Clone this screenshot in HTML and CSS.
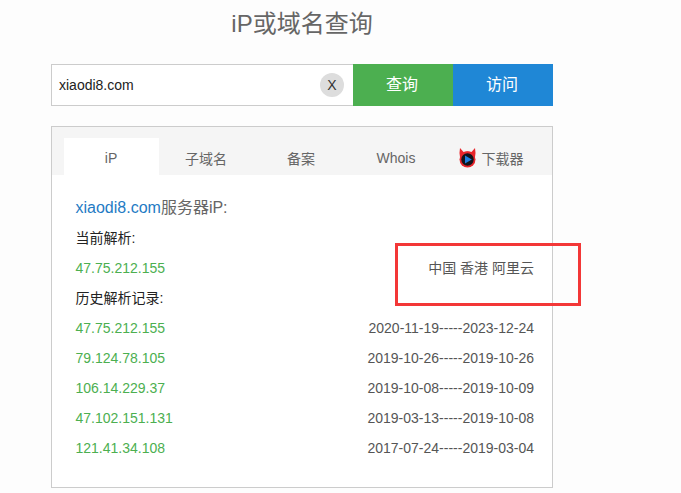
FILE: index.html
```html
<!DOCTYPE html>
<html lang="en">
<head>
    <meta charset="UTF-8">
    <title>iP或域名查询</title>
    <link rel="stylesheet" href="styles.css">
</head>
<body>
    <div class="wrap">
        <h1>iP或域名查询</h1>

        <div class="search">
            <div class="search-box">
                <span class="search-text">xiaodi8.com</span>
                <span class="clear">X</span>
            </div>
            <div class="btn btn-green">查询</div>
            <div class="btn btn-blue">访问</div>
        </div>

        <div class="panel">
            <div class="tabs">
                <div class="tab active">iP</div>
                <div class="tab">子域名</div>
                <div class="tab">备案</div>
                <div class="tab">Whois</div>
                <div class="tab">
                    <svg class="tab-icon" width="17" height="20" viewBox="0 0 17 20">
                        <path d="M1 0 L4.5 4 Q8.5 2.6 12.5 4 L16 0 Q17 5 16 9 L1 9 Q0 5 1 0 Z" fill="#e8262c"/>
                        <circle cx="8.5" cy="11.5" r="8" fill="#e8262c"/>
                        <circle cx="8.5" cy="11.5" r="6.2" fill="#13151c"/>
                        <path d="M6 7.6 L12.8 11.5 L6 15.4 Z" fill="#1e7fe0"/>
                    </svg>
                    下载器
                </div>
            </div>

            <div class="content">
                <div class="heading"><a class="domain">xiaodi8.com</a>服务器iP:</div>
                <div class="label">当前解析:</div>
                <div class="row">
                    <span class="ip">47.75.212.155</span>
                    <span class="info">中国 香港 阿里云</span>
                </div>
                <div class="label">历史解析记录:</div>
                <div class="row">
                    <span class="ip">47.75.212.155</span>
                    <span class="info">2020-11-19-----2023-12-24</span>
                </div>
                <div class="row">
                    <span class="ip">79.124.78.105</span>
                    <span class="info">2019-10-26-----2019-10-26</span>
                </div>
                <div class="row">
                    <span class="ip">106.14.229.37</span>
                    <span class="info">2019-10-08-----2019-10-09</span>
                </div>
                <div class="row">
                    <span class="ip">47.102.151.131</span>
                    <span class="info">2019-03-13-----2019-10-08</span>
                </div>
                <div class="row">
                    <span class="ip">121.41.34.108</span>
                    <span class="info">2017-07-24-----2019-03-04</span>
                </div>
            </div>
        </div>
    </div>

    <div class="marker"></div>
</body>
</html>
```

FILE: styles.css
```css
body {
    margin: 0;
    background-color: #fdfdfd;
    font-family: "Liberation Sans", "Noto Sans CJK SC", sans-serif;
    color: #555;
    font-size: 14px;
}
.wrap {
    width: 502px;
    margin-left: 51px;
}
h1 {
    margin: 0;
    height: 64px;
    padding-top: 8px;
    box-sizing: border-box;
    font-size: 24px;
    line-height: 32px;
    font-weight: normal;
    text-align: center;
    color: #666;
}
.search {
    display: flex;
    height: 42px;
}
.search-box {
    flex: 1;
    display: flex;
    align-items: center;
    justify-content: space-between;
    padding: 0 9px 0 7px;
    background-color: #fff;
    border: 1px solid #ccc;
    border-right: none;
}
.search-text {
    font-size: 14px;
    color: #222;
}
.clear {
    width: 24px;
    height: 24px;
    line-height: 24px;
    border-radius: 50%;
    background-color: #ddd;
    text-align: center;
    font-size: 14px;
    color: #333;
}
.btn {
    width: 100px;
    line-height: 42px;
    padding-right: 2px;
    box-sizing: border-box;
    text-align: center;
    font-size: 16px;
    color: #fff;
}
.btn-green {
    background-color: #4caf50;
}
.btn-blue {
    background-color: #1f87d6;
}
.panel {
    margin-top: 20px;
    height: 362px;
    box-sizing: border-box;
    border: 1px solid #ccc;
    background-color: #fff;
}
.tabs {
    display: flex;
    height: 48px;
    padding: 11px 12px 0;
    box-sizing: border-box;
    background-color: #f5f5f5;
}
.tab {
    width: 95px;
    display: flex;
    align-items: center;
    justify-content: center;
    padding: 3px 1px 0 0;
    box-sizing: border-box;
    font-size: 14px;
    color: #666;
}
.tab.active {
    background-color: #fff;
}
.tab-icon {
    margin: 0 6px 0 0;
}
.content {
    padding: 18px 18px 0 23.5px;
}
.heading {
    height: 30px;
    line-height: 30px;
    font-size: 16px;
    color: #666;
}
.domain {
    color: #1f7bc4;
}
.label {
    height: 30px;
    line-height: 30px;
    color: #222;
}
.row {
    display: flex;
    justify-content: space-between;
    height: 30px;
    line-height: 30px;
}
.ip {
    color: #4caf50;
}
.info {
    color: #555;
}
.marker {
    position: absolute;
    left: 395px;
    top: 243px;
    width: 186px;
    height: 63px;
    box-sizing: border-box;
    border: 3px solid #f33737;
}
```
